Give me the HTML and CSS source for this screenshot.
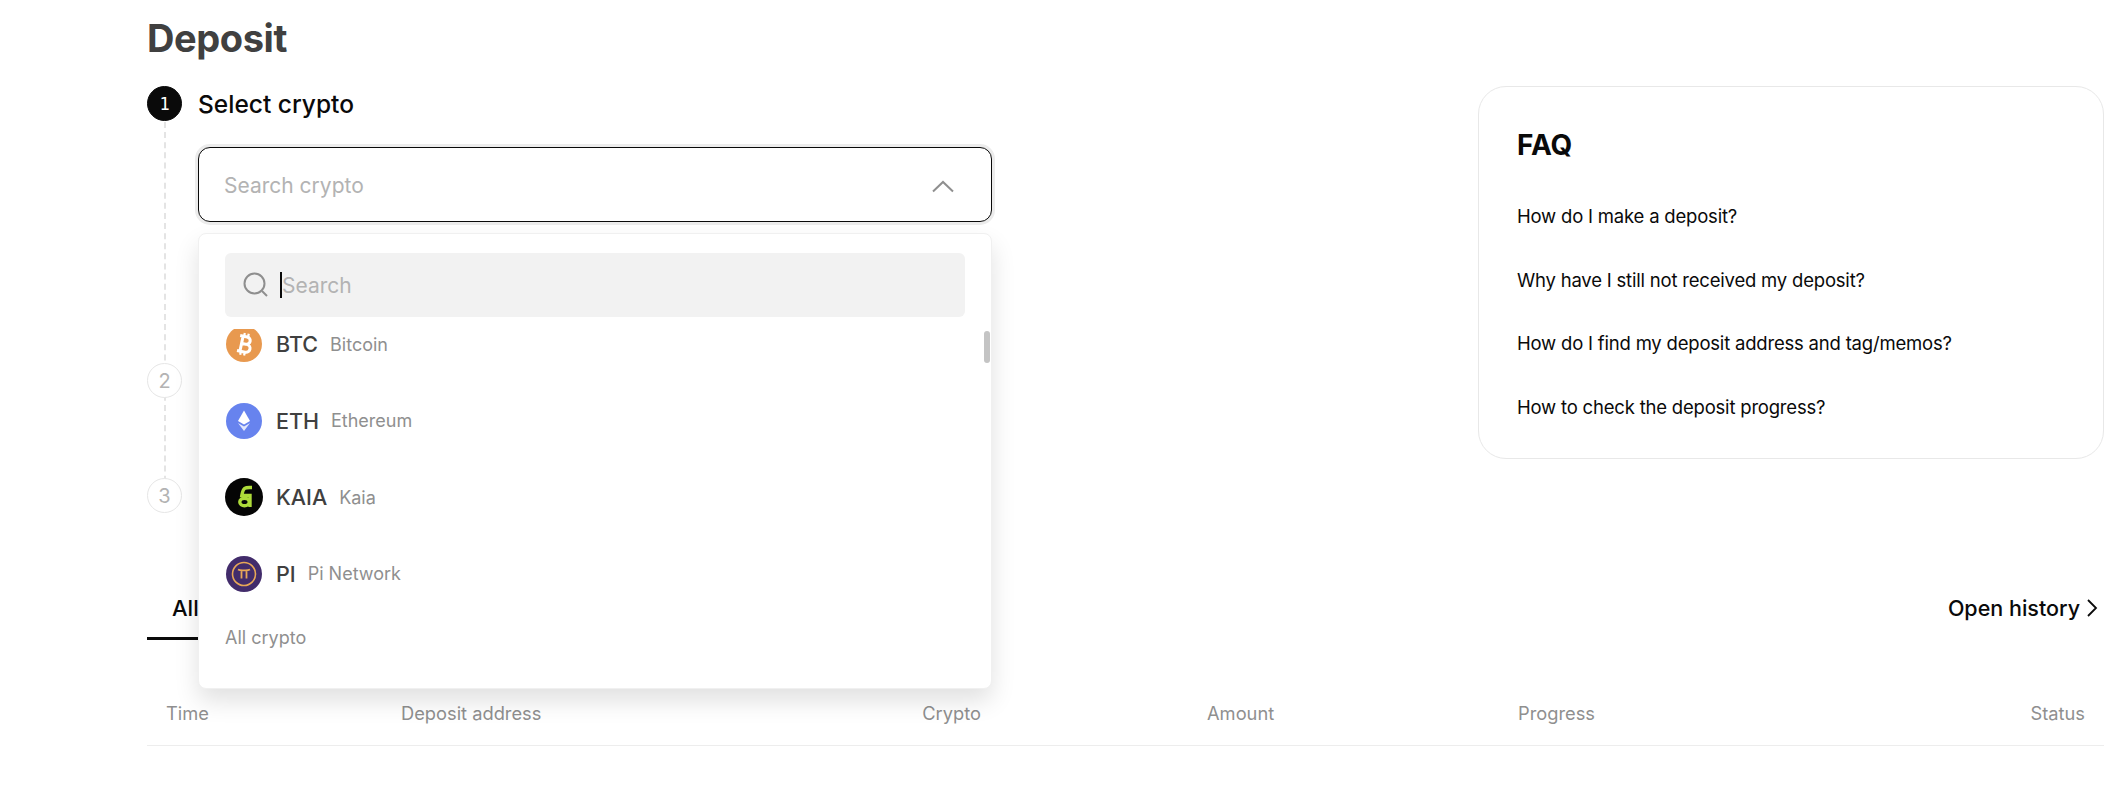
FILE: index.html
```html
<!DOCTYPE html>
<html lang="en">
<head>
  <meta charset="UTF-8" />
  <title>Deposit</title>
  <link rel="stylesheet" href="styles.css">
</head>
<body>
  <main class="page">
    <h1 class="page-title">Deposit</h1>

    <div class="columns">
      <section class="steps">
        <div class="step step-one">
          <span class="step-num active">1</span>
          <h2 class="step-title">Select crypto</h2>
        </div>

        <div class="select-wrap">
          <div class="select-box">
            <span class="select-placeholder">Search crypto</span>
            <svg class="chevron" width="24" height="14" viewBox="0 0 24 14"><path d="M2 12.5 12 3l10 9.5" fill="none" stroke="#8f8f8f" stroke-width="2"/></svg>
          </div>

          <!-- open dropdown lies over the other steps and the tabs -->
          <div class="dropdown">
            <div class="search-field">
              <svg width="28" height="28" viewBox="0 0 28 28"><circle cx="12.5" cy="12.5" r="10" fill="none" stroke="#8f8f8f" stroke-width="2"/><path d="m20 20 5 5" stroke="#8f8f8f" stroke-width="2"/></svg>
              <span class="caret"></span>
              <span class="search-placeholder">Search</span>
            </div>
            <div class="coin-list">
              <div class="coin coin-first">
                <svg class="coin-icon" viewBox="0 0 36 36"><circle cx="18" cy="18" r="18" fill="#e8994f"/><g transform="rotate(12 18 18)" fill="none" stroke="#fff" stroke-width="3"><path d="M12.500 10.500h7.200c5 0 5 7.300 0 7.300h-5m0 0h6c5.600 0 5.600 8 0 8h-8.200M15.500 10.500v15.300"/><path d="M16.500 7v3.500M20.500 7v3.500M16.500 25.800v3.500M20.500 25.800v3.500" stroke-width="2.200"/></g></svg>
                <span class="coin-symbol">BTC</span><span class="coin-name">Bitcoin</span>
              </div>
              <div class="coin">
                <svg class="coin-icon" viewBox="0 0 36 36"><circle cx="18" cy="18" r="18" fill="#6783ee"/><path d="M18 7.500 12 18l6 3.500 6-3.500z" fill="#fff"/><path d="m12 20 6 8 6-8-6 3.500z" fill="#e3e8fb"/></svg>
                <span class="coin-symbol">ETH</span><span class="coin-name">Ethereum</span>
              </div>
              <div class="coin">
                <svg class="coin-icon coin-icon-lg" viewBox="0 0 38 38"><circle cx="19" cy="19" r="19" fill="#050505"/><path d="M27 9.500c-3 0-5.500-.4-7.300.9-1.700 1.200-2.300 3.500-2.900 7.100h8.200v11.500" fill="none" stroke="#aedb3a" stroke-width="3.400"/><ellipse cx="19.500" cy="24" rx="4.700" ry="3.800" fill="none" stroke="#aedb3a" stroke-width="3.400"/></svg>
                <span class="coin-symbol">KAIA</span><span class="coin-name">Kaia</span>
              </div>
              <div class="coin">
                <svg class="coin-icon" viewBox="0 0 36 36"><circle cx="18" cy="18" r="18" fill="#422c6b"/><circle cx="18" cy="18" r="11.500" fill="none" stroke="#e8a857" stroke-width="1.600"/><path d="M12 13.500c2 1 3.500.8 6 .8s4 .2 6-.8M15.500 14v8.500M20.500 14v8.500" fill="none" stroke="#e8a857" stroke-width="1.800"/></svg>
                <span class="coin-symbol">PI</span><span class="coin-name">Pi Network</span>
              </div>
              <div class="list-label">All crypto</div>
            </div>
            <span class="scroll-thumb"></span>
          </div>
        </div>

        <div class="step step-two">
          <span class="step-num">2</span>
        </div>
        <div class="step step-three">
          <span class="step-num">3</span>
        </div>
      </section>

      <aside class="faq">
        <h3 class="faq-title">FAQ</h3>
        <a class="faq-link">How do I make a deposit?</a>
        <a class="faq-link">Why have I still not received my deposit?</a>
        <a class="faq-link">How do I find my deposit address and tag/memos?</a>
        <a class="faq-link">How to check the deposit progress?</a>
      </aside>
    </div>

    <div class="tabs">
      <span class="tab">All</span>
      <a class="history-link">Open history
        <svg width="12" height="20" viewBox="0 0 12 20"><path d="m2 2 8 8-8 8" fill="none" stroke="#0a0a0a" stroke-width="1.800"/></svg>
      </a>
    </div>

    <div class="table-head">
      <span>Time</span>
      <span>Deposit address</span>
      <span class="right">Crypto</span>
      <span class="amount">Amount</span>
      <span>Progress</span>
      <span class="right">Status</span>
    </div>
  </main>
</body>
</html>
```

FILE: styles.css
```css
body {
  margin: 0;
  background-color: #fff;
  color: #0a0a0a;
  font-family: 'Inter', 'Liberation Sans', sans-serif;
}

.page {
  padding: 0 16px 0 147px;
  height: 806px;
  box-sizing: border-box;
  overflow: hidden;
}

.page-title {
  margin: 0;
  padding-top: 15px;
  font-size: 38px;
  line-height: 46px;
  font-weight: 700;
  letter-spacing: -0.4px;
  color: #404040;
}

.columns {
  display: flex;
  justify-content: space-between;
  margin-top: 25px;
  height: 500px;
}

/* === Steps on the left === */
.steps {
  position: relative;
  width: 845px;
}

/* dashed line running through the step numbers */
.steps::before {
  content: "";
  position: absolute;
  left: 17px;
  top: 36px;
  height: 390px;
  border-left: 2px dashed #e4e4e4;
}

.step {
  display: flex;
  align-items: center;
  gap: 16px;
  position: relative;
}

.step-num {
  display: flex;
  align-items: center;
  justify-content: center;
  width: 35px;
  height: 35px;
  box-sizing: border-box;
  border: 1px solid #e6e6e6;
  border-radius: 50%;
  background-color: #fff;
  color: #b3b3b3;
  font-size: 20px;
}

.step-num.active {
  background-color: #0a0a0a;
  border-color: #0a0a0a;
  color: #fff;
  font-size: 17px;
  font-family: 'DejaVu Sans Mono', monospace;
}

.step-title {
  margin: 0;
  font-size: 24.5px;
  font-weight: 500;
}

.step-two {
  margin-top: 141px;
}

.step-three {
  margin-top: 80px;
}

/* === Crypto select === */
.select-wrap {
  position: relative;
  margin: 26px 0 0 51px;
  width: 794px;
  height: 75px;
}

.select-box {
  display: flex;
  align-items: center;
  justify-content: space-between;
  height: 75px;
  box-sizing: border-box;
  padding: 2px 36px 0 25px;
  border: 1px solid #0a0a0a;
  border-radius: 12px;
  box-shadow: 0 0 0 3px #ececec;
  background-color: #fff;
}

.select-placeholder {
  font-size: 21px;
  color: #b3b3b3;
}

.chevron {
  display: block;
}

.dropdown {
  position: absolute;
  z-index: 5;
  top: 86px;
  left: 0;
  right: 0;
  height: 456px;
  box-sizing: border-box;
  padding-top: 19px;
  border: 1px solid #f0f0f0;
  border-radius: 8px;
  background-color: #fff;
  box-shadow: 0 12px 24px rgba(0, 0, 0, 0.12);
}

.search-field {
  display: flex;
  align-items: center;
  margin: 0 26px 0 26px;
  height: 64px;
  padding-left: 17px;
  border-radius: 6px;
  background-color: #f2f2f2;
}

.caret {
  width: 2px;
  height: 26px;
  margin-left: 10px;
  background-color: #0a0a0a;
}

.search-placeholder {
  font-size: 21px;
  color: #b3b3b3;
}

.coin-list {
  margin-top: 12px;
  height: 358px;
  overflow: hidden;
}

.coin {
  display: flex;
  align-items: center;
  height: 76.5px;
  padding-left: 27px;
}

.coin-first {
  margin-top: -23px;
}

.coin-icon {
  width: 36px;
  height: 36px;
  flex: none;
}

.coin-icon-lg {
  width: 38px;
  height: 38px;
  margin: 0 -1px;
}

.coin-symbol {
  margin-left: 14px;
  font-size: 21.5px;
  font-weight: 500;
  color: #404040;
}

.coin-name {
  margin-left: 12px;
  font-size: 18px;
  color: #8f8f8f;
}

.list-label {
  padding: 15px 0 0 26px;
  font-size: 18px;
  color: #8f8f8f;
}

.scroll-thumb {
  position: absolute;
  top: 97px;
  right: 1px;
  width: 6px;
  height: 32px;
  border-radius: 3px;
  background-color: #c4c4c4;
}

/* === FAQ card === */
.faq {
  align-self: flex-start;
  width: 626px;
  height: 373px;
  box-sizing: border-box;
  padding: 40px 38px;
  border: 1px solid #e8e8e8;
  border-radius: 28px;
}

.faq-title {
  margin: 0 0 39px;
  font-size: 28px;
  line-height: 36px;
  font-weight: 700;
}

.faq-link {
  display: block;
  height: 63.7px;
  font-size: 18.5px;
  line-height: 28px;
  letter-spacing: -0.2px;
}

/* === Tabs and history table === */
.tabs {
  display: flex;
  justify-content: space-between;
  align-items: flex-start;
  height: 54px;
}

.tab {
  padding: 4px 60px 0 25px;
  height: 54px;
  box-sizing: border-box;
  border-bottom: 3px solid #0a0a0a;
  font-size: 22px;
  line-height: 36px;
  font-weight: 500;
}

.history-link {
  display: flex;
  align-items: center;
  gap: 6px;
  padding: 4px 6px 0 0;
  font-size: 21.5px;
  line-height: 36px;
  font-weight: 500;
}

.table-head {
  display: grid;
  grid-template-columns: 235px 480px 100px 537px 1fr 100px;
  align-items: center;
  height: 106px;
  padding: 41px 19px 0;
  box-sizing: border-box;
  border-bottom: 1px solid #ededed;
  font-size: 18.3px;
  color: #8f8f8f;
}

.table-head .right {
  text-align: right;
}

.table-head .amount {
  padding-left: 226px;
}
```
